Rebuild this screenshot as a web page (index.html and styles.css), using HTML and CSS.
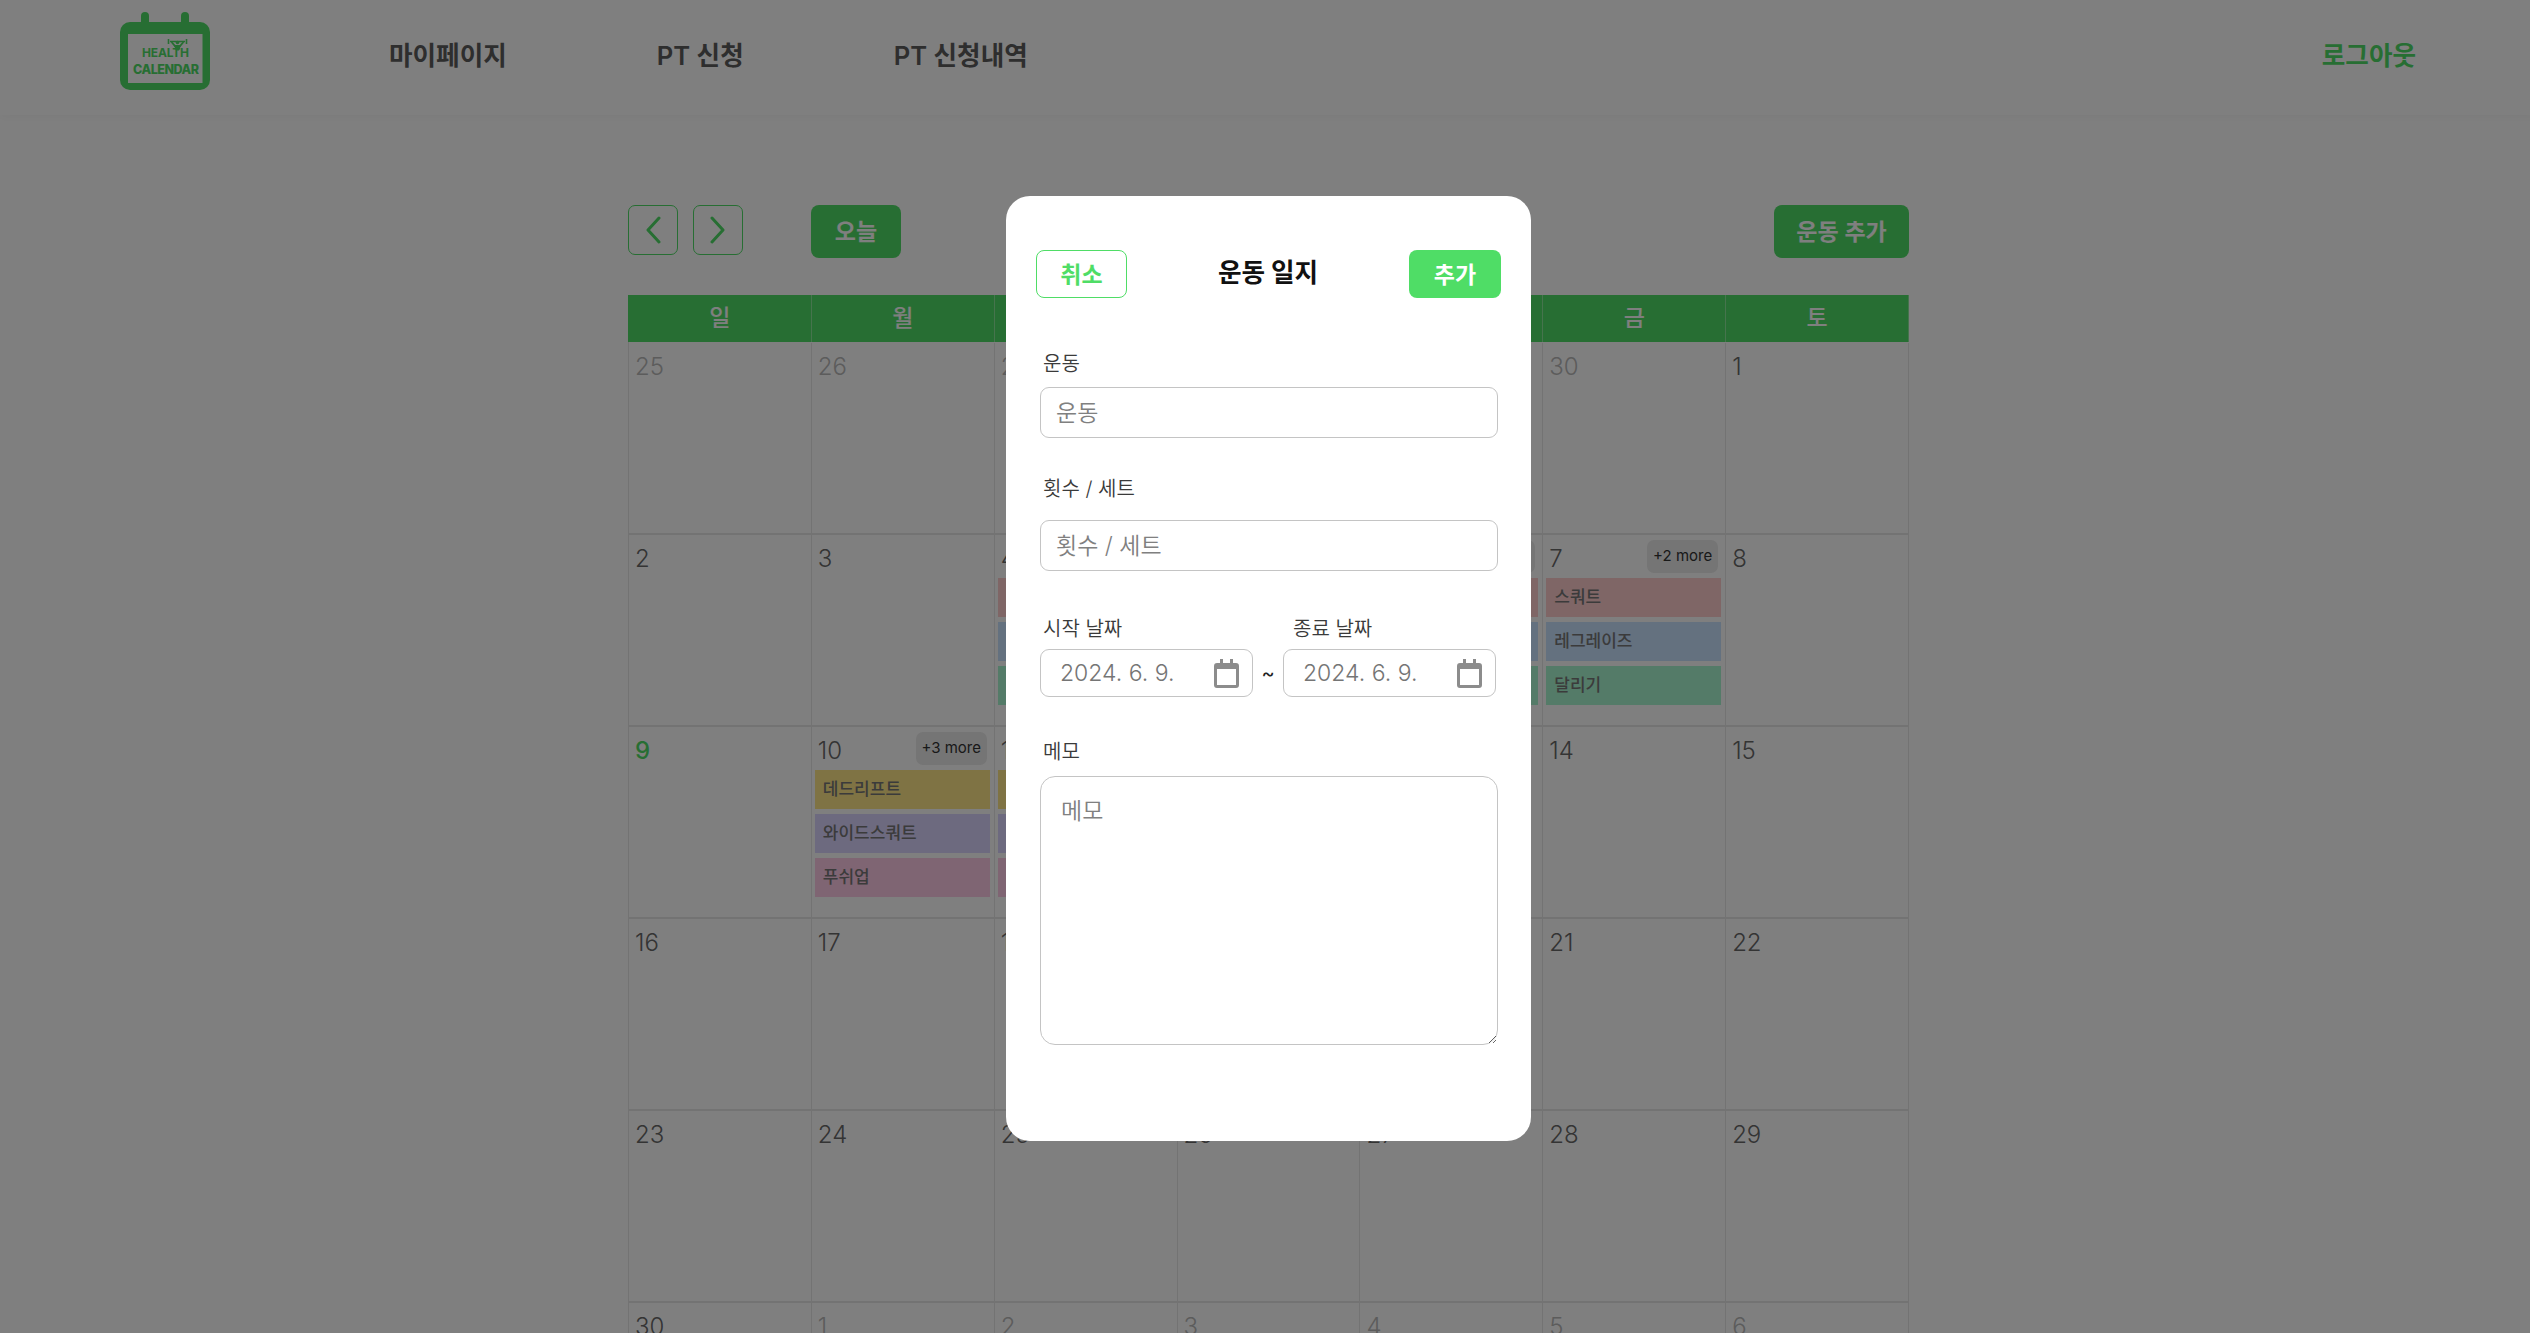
FILE: index.html
```html
<!DOCTYPE html>
<html lang="ko">
<head>
    <meta charset="UTF-8">
    <meta name="viewport" content="width=device-width, initial-scale=1.0">
    <title>Health Calendar</title>
    <link rel="stylesheet" href="styles.css">
</head>
<body>
    <div id="page">
        <header class="topbar">
            <svg class="logo" viewBox="0 0 92 80" width="92" height="80">
                <rect x="22" y="0" width="8" height="16" rx="4" fill="#4fdd66"/>
                <rect x="62" y="0" width="8" height="16" rx="4" fill="#4fdd66"/>
                <rect x="1" y="10" width="90" height="68" rx="10" fill="#4fdd66"/>
                <rect x="9" y="22" width="74.500" height="49" fill="#fff"/>
                <path d="M49.500 27v5M67.500 27v5M51 29.500h15" fill="none" stroke="#4fdd66" stroke-width="1.600"/>
                <path d="M52.500 30l3.500 4h5l3.500-4" fill="none" stroke="#4fdd66" stroke-width="1.800"/>
                <circle cx="58.500" cy="30.500" r="1.800" fill="#4fdd66"/>
                <path d="M55 33.500h7l-2 5h-3z" fill="#4fdd66"/>
                <text class="logo-text health" x="46.500" y="45" text-anchor="middle" textLength="47">HEALTH</text>
                <text class="logo-text" x="47" y="62" text-anchor="middle" textLength="66">CALENDAR</text>
            </svg>
            <nav class="menu">
                <a href="#">마이페이지</a>
                <a href="#">PT 신청</a>
                <a href="#">PT 신청내역</a>
            </nav>
            <a class="logout" href="#">로그아웃</a>
        </header>

        <main id="calendar-wrap">
            <div class="toolbar">
                <button class="arrow-btn">
                    <svg viewBox="0 0 18 28" width="18" height="28"><polyline points="15,2 4,14 15,26"/></svg>
                </button>
                <button class="arrow-btn">
                    <svg viewBox="0 0 18 28" width="18" height="28"><polyline points="3,2 14,14 3,26"/></svg>
                </button>
                <button class="green-btn today-btn">오늘</button>
                <button class="green-btn add-btn">운동 추가</button>
            </div>

            <div class="week-head">
                <div>일</div><div>월</div><div>화</div><div>수</div><div>목</div><div>금</div><div>토</div>
            </div>

            <div class="month">
                <div class="day other"><div class="day-top"><span>25</span></div></div>
                <div class="day other"><div class="day-top"><span>26</span></div></div>
                <div class="day other"><div class="day-top"><span>27</span></div></div>
                <div class="day other"><div class="day-top"><span>28</span></div></div>
                <div class="day other"><div class="day-top"><span>29</span></div></div>
                <div class="day other"><div class="day-top"><span>30</span></div></div>
                <div class="day"><div class="day-top"><span>1</span></div></div>

                <div class="day"><div class="day-top"><span>2</span></div></div>
                <div class="day"><div class="day-top"><span>3</span></div></div>
                <div class="day">
                    <div class="day-top"><span>4</span><em class="more">+2 more</em></div>
                    <div class="event red">스쿼트</div>
                    <div class="event blue">레그레이즈</div>
                    <div class="event green">달리기</div>
                </div>
                <div class="day"><div class="day-top"><span>5</span></div></div>
                <div class="day">
                    <div class="day-top"><span>6</span><em class="more">+2 more</em></div>
                    <div class="event red">스쿼트</div>
                    <div class="event blue">레그레이즈</div>
                    <div class="event green">달리기</div>
                </div>
                <div class="day">
                    <div class="day-top"><span>7</span><em class="more">+2 more</em></div>
                    <div class="event red">스쿼트</div>
                    <div class="event blue">레그레이즈</div>
                    <div class="event green">달리기</div>
                </div>
                <div class="day"><div class="day-top"><span>8</span></div></div>

                <div class="day today"><div class="day-top"><span>9</span></div></div>
                <div class="day">
                    <div class="day-top"><span>10</span><em class="more">+3 more</em></div>
                    <div class="event yellow">데드리프트</div>
                    <div class="event purple">와이드스쿼트</div>
                    <div class="event pink">푸쉬업</div>
                </div>
                <div class="day">
                    <div class="day-top"><span>11</span><em class="more">+3 more</em></div>
                    <div class="event yellow">데드리프트</div>
                    <div class="event purple">와이드스쿼트</div>
                    <div class="event pink">푸쉬업</div>
                </div>
                <div class="day"><div class="day-top"><span>12</span></div></div>
                <div class="day"><div class="day-top"><span>13</span></div></div>
                <div class="day"><div class="day-top"><span>14</span></div></div>
                <div class="day"><div class="day-top"><span>15</span></div></div>

                <div class="day"><div class="day-top"><span>16</span></div></div>
                <div class="day"><div class="day-top"><span>17</span></div></div>
                <div class="day"><div class="day-top"><span>18</span></div></div>
                <div class="day"><div class="day-top"><span>19</span></div></div>
                <div class="day"><div class="day-top"><span>20</span></div></div>
                <div class="day"><div class="day-top"><span>21</span></div></div>
                <div class="day"><div class="day-top"><span>22</span></div></div>

                <div class="day"><div class="day-top"><span>23</span></div></div>
                <div class="day"><div class="day-top"><span>24</span></div></div>
                <div class="day"><div class="day-top"><span>25</span></div></div>
                <div class="day"><div class="day-top"><span>26</span></div></div>
                <div class="day"><div class="day-top"><span>27</span></div></div>
                <div class="day"><div class="day-top"><span>28</span></div></div>
                <div class="day"><div class="day-top"><span>29</span></div></div>

                <div class="day"><div class="day-top"><span>30</span></div></div>
                <div class="day other"><div class="day-top"><span>1</span></div></div>
                <div class="day other"><div class="day-top"><span>2</span></div></div>
                <div class="day other"><div class="day-top"><span>3</span></div></div>
                <div class="day other"><div class="day-top"><span>4</span></div></div>
                <div class="day other"><div class="day-top"><span>5</span></div></div>
                <div class="day other"><div class="day-top"><span>6</span></div></div>
            </div>
        </main>
    </div>

    <div id="overlay">
        <form class="modal">
            <div class="modal-head">
                <button type="button" class="cancel-btn">취소</button>
                <h2>운동 일지</h2>
                <button type="button" class="save-btn">추가</button>
            </div>

            <label class="label first-label">운동</label>
            <input type="text" class="text-input" placeholder="운동">

            <label class="label count-label">횟수 / 세트</label>
            <input type="text" class="text-input" placeholder="횟수 / 세트">

            <div class="date-row">
                <div class="date-col">
                    <label class="label">시작 날짜</label>
                    <div class="date-box">
                        <input type="text" value="2024. 6. 9." readonly>
                        <svg viewBox="0 0 25 29" width="25" height="29"><path d="M3 4h3V0h3v4h7V0h3v4h3a3 3 0 0 1 3 3v19a3 3 0 0 1-3 3H3a3 3 0 0 1-3-3V7a3 3 0 0 1 3-3zM3 10v16h19V10z" fill-rule="evenodd"/></svg>
                    </div>
                </div>
                <div class="tilde">~</div>
                <div class="date-col end-col">
                    <label class="label">종료 날짜</label>
                    <div class="date-box">
                        <input type="text" value="2024. 6. 9." readonly>
                        <svg viewBox="0 0 25 29" width="25" height="29"><path d="M3 4h3V0h3v4h7V0h3v4h3a3 3 0 0 1 3 3v19a3 3 0 0 1-3 3H3a3 3 0 0 1-3-3V7a3 3 0 0 1 3-3zM3 10v16h19V10z" fill-rule="evenodd"/></svg>
                    </div>
                </div>
            </div>

            <label class="label memo-label">메모</label>
            <textarea class="memo" placeholder="메모"></textarea>
        </form>
    </div>
</body>
</html>
```

FILE: styles.css
```css
:root {
    --green: #4fdd66;
    --line: #e6e6e6;
    --text-color: #222;
}

* {
    box-sizing: border-box;
}

html, body {
    margin: 0;
    height: 100%;
    overflow: hidden;
}

body {
    font-family: Inter, "Noto Sans CJK KR", sans-serif;
    background-color: #fff;
    color: var(--text-color);
}

#page {
    width: 2537px;
}

button {
    font-family: inherit;
    cursor: pointer;
}

/* top bar */
.topbar {
    display: flex;
    align-items: center;
    height: 115px;
    padding: 0 121px 0 119px;
    box-shadow: 0 2px 10px rgba(0,0,0,0.04);
}

.logo {
    display: block;
    margin-top: -11px;
}

.logo-text {
    font-family: Inter, sans-serif;
    font-size: 12.500px;
    font-weight: 800;
    fill: var(--green);
}

.logo-text.health {
    font-size: 12px;
    font-weight: 700;
}

.menu {
    display: flex;
    gap: 150px;
    margin-left: 178px;
    margin-top: -8px;
}

.menu a, .logout {
    font-size: 25.600px;
    font-weight: 600;
    color: #5c5c5c;
    text-decoration: none;
}

.logout {
    margin-left: auto;
    margin-top: -8px;
    color: var(--green);
}

/* calendar */
#calendar-wrap {
    width: 1281px;
    margin: 0 auto;
    padding-top: 90px;
}

.toolbar {
    display: flex;
    align-items: flex-start;
    height: 53px;
    margin-bottom: 37px;
}

.arrow-btn {
    display: flex;
    align-items: center;
    justify-content: center;
    width: 50px;
    height: 50px;
    padding: 0;
    margin-right: 15px;
    background: none;
    border: 1px solid var(--green);
    border-radius: 7px;
}

.arrow-btn polyline {
    fill: none;
    stroke: var(--green);
    stroke-width: 3;
    stroke-linecap: round;
    stroke-linejoin: round;
}

.green-btn {
    height: 53px;
    padding: 0 0 4px;
    color: #fff;
    font-size: 23px;
    font-weight: 600;
    background-color: var(--green);
    border: none;
    border-radius: 8px;
}

.today-btn {
    width: 90px;
    margin-left: 53px;
}

.add-btn {
    width: 135px;
    margin-left: auto;
}

.week-head {
    display: grid;
    grid-template-columns: repeat(7, 1fr);
    height: 47px;
    padding-left: 1px;
    background-color: var(--green);
}

.week-head div {
    color: #fff;
    font-size: 23px;
    font-weight: 500;
    line-height: 46px;
    text-align: center;
    border-right: 1px solid #8ce89b;
}

.month {
    display: grid;
    grid-template-columns: repeat(7, 1fr);
    grid-auto-rows: 192px;
    border-left: 1px solid var(--line);
    padding-top: 1px;
}

.day {
    padding: 5px 4px 0 3px;
    border-right: 1px solid var(--line);
    border-bottom: 2px solid var(--line);
}

.day-top {
    display: flex;
    align-items: center;
    justify-content: space-between;
    height: 33px;
    margin-bottom: 5px;
    padding: 0 3px 0 3px;
    font-size: 24px;
    font-weight: 300;
    color: #686868;
}

.day-top span {
    padding-top: 3px;
}

.other .day-top {
    color: #b8b8b8;
}

.today .day-top {
    color: #4fdd66;
    font-weight: 500;
}

.more {
    width: 71px;
    height: 33px;
    font-size: 15px;
    font-weight: 400;
    font-style: normal;
    line-height: 31px;
    text-align: center;
    color: #333;
    background-color: #eaeaea;
    border-radius: 7px;
}

.event {
    height: 39px;
    margin-bottom: 5px;
    padding-left: 8px;
    font-size: 17px;
    font-weight: 500;
    line-height: 38px;
    color: #777;
}

.red { background-color: #ffcdcd; }
.blue { background-color: #c8e2ff; }
.green { background-color: #a8f6d0; }
.yellow { background-color: #ffe688; }
.purple { background-color: #dad4ff; }
.pink { background-color: #ffcae6; }

/* modal */
#overlay {
    position: absolute;
    top: 0;
    left: 0;
    display: flex;
    align-items: center;
    justify-content: center;
    width: 2537px;
    height: 1337px;
    background-color: rgba(0,0,0,0.5);
}

.modal {
    display: flex;
    flex-direction: column;
    width: 525px;
    height: 945px;
    padding: 54px 33px 0 34px;
    background-color: #fff;
    border-radius: 24px;
}

.modal-head {
    display: flex;
    align-items: center;
    justify-content: space-between;
    height: 48px;
    margin: 0 -3px 54px -4px;
}

.modal-head h2 {
    margin: -7px 0 0;
    font-size: 25.600px;
    font-weight: 700;
    color: #111;
}

.cancel-btn, .save-btn {
    width: 91px;
    height: 48px;
    padding: 0 0 2px;
    font-size: 23px;
    font-weight: 600;
    border-radius: 8px;
}

.cancel-btn {
    color: var(--green);
    background-color: #fff;
    border: 1px solid var(--green);
}

.save-btn {
    width: 92px;
    color: #fff;
    background-color: var(--green);
    border: none;
}

.label {
    display: block;
    padding-left: 3px;
    font-size: 20px;
    line-height: 24px;
    font-weight: 350;
    color: #3a3a3a;
}

.first-label {
    margin-bottom: 11px;
}

.text-input {
    width: 100%;
    height: 51px;
    padding: 0 15px;
    font-family: inherit;
    font-size: 23px;
    font-weight: 350;
    border: 1.500px solid #c4c4c4;
    border-radius: 9px;
    outline: none;
}

.text-input::placeholder, .memo::placeholder {
    color: #808080;
}

.count-label {
    margin: 39px 0 19px;
}

.date-row {
    display: flex;
    align-items: flex-end;
    margin-top: 46px;
}

.date-col {
    width: 213px;
}

.date-col .label {
    margin-bottom: 8px;
}

.end-col .label {
    padding-left: 10px;
}

.date-box {
    display: flex;
    align-items: center;
    height: 48px;
    padding: 0 13px 0 19px;
    border: 1.500px solid #c4c4c4;
    border-radius: 9px;
}

.date-box input {
    flex: 1;
    min-width: 0;
    padding: 0;
    font-family: inherit;
    font-size: 23px;
    font-weight: 350;
    color: #757575;
    border: none;
    outline: none;
}

.date-box svg {
    fill: #8c8c8c;
}

.tilde {
    width: 30px;
    font-size: 20px;
    line-height: 48px;
    text-align: center;
}

.memo-label {
    margin: 43px 0 12px;
}

.memo {
    display: block;
    width: 100%;
    height: 269px;
    padding: 15px 20px;
    font-family: inherit;
    font-size: 23px;
    font-weight: 350;
    border: 1.500px solid #c4c4c4;
    border-radius: 15px;
    outline: none;
}
```
